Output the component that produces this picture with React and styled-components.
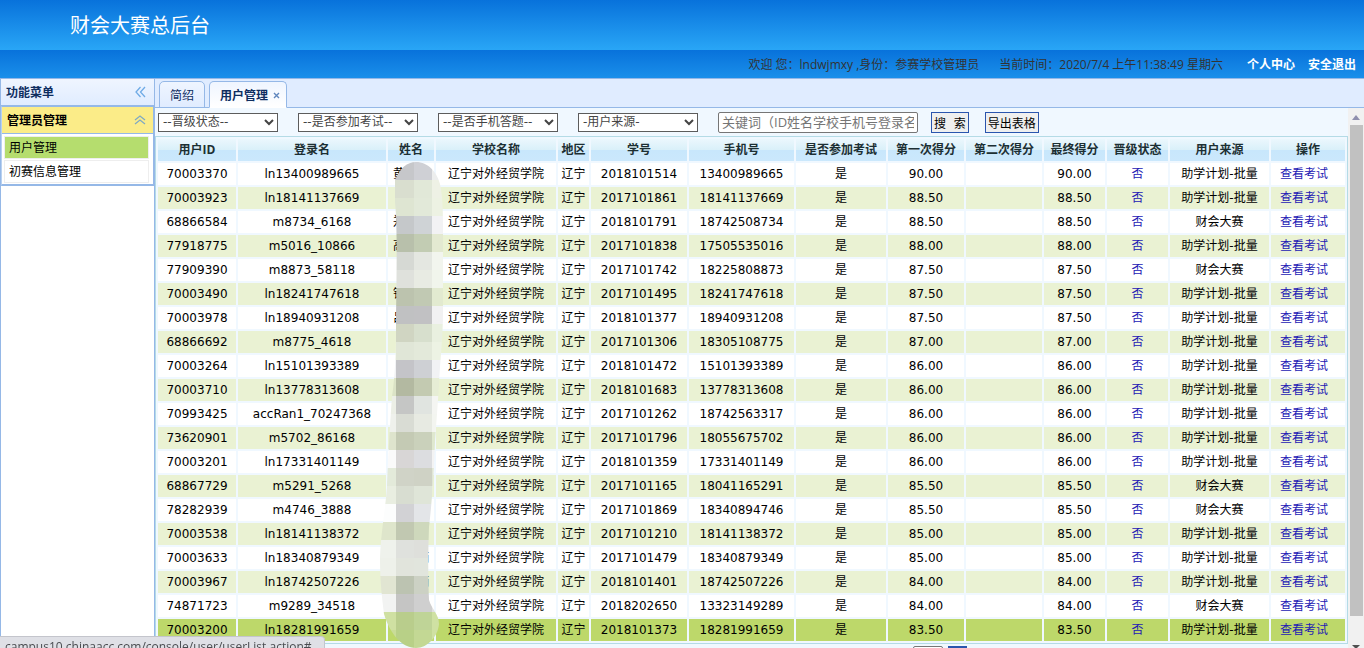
import React from 'react'
import styled, { createGlobalStyle } from 'styled-components'

const GlobalStyle = createGlobalStyle`
  * {
    box-sizing: border-box;
  }

  html, body, #root {
    height: 100%;
    margin: 0;
  }

  body {
    overflow: hidden;
    font-family: 'Open Sans', 'Noto Sans CJK SC', sans-serif;
    font-size: 12px;
    color: #000;
  }
`;

const Page = styled.div`
  display: flex;
  flex-direction: column;
  height: 100vh;
  overflow: hidden;
  background: #fff;
`;

const Banner = styled.header`
  flex: none;
  display: flex;
  align-items: center;
  height: 50px;
  padding: 2px 70px 0;
  background: linear-gradient(#0872db, #29a6f6);
`;

const BannerTitle = styled.h1`
  margin: 0;
  font-size: 20px;
  font-weight: 400;
  line-height: 24px;
  color: #fff;
`;

const UserBar = styled.div`
  flex: none;
  display: flex;
  align-items: center;
  justify-content: flex-end;
  gap: 20px;
  height: 28px;
  padding-right: 8px;
  background: linear-gradient(#0872db, #1a8fea);
  color: #333;
  white-space: nowrap;
`;

const UserLinks = styled.nav`
  display: flex;
  gap: 13px;
  padding-left: 4px;
`;

const UserLink = styled.a`
  color: #fff;
  font-weight: 700;
  text-decoration: none;
`;

const Body = styled.div`
  flex: 1;
  display: flex;
  min-height: 0;
  border-top: 1px solid #95b8e7;
`;

const Sidebar = styled.aside`
  flex: none;
  width: 155px;
  border: solid #95b8e7;
  border-width: 0 1px;
`;

const SidebarHead = styled.div`
  display: flex;
  align-items: center;
  justify-content: space-between;
  height: 27px;
  padding: 0 8px 0 5px;
  border-bottom: 1px solid #95b8e7;
  background: linear-gradient(#eff5ff, #e0ecff);
  color: #0e2d5f;
  font-weight: 700;
`;

const Accordion = styled.section`
  border: 1px solid #95b8e7;
  border-bottom-width: 2px;
  border-left-color: #b9d1f0;
`;

const AccordionHead = styled.div`
  display: flex;
  align-items: center;
  justify-content: space-between;
  height: 27px;
  padding: 0 7px 0 5px;
  border-bottom: 1px solid #95b8e7;
  background: #fbec88;
  font-weight: 700;
`;

const Menu = styled.ul`
  display: flex;
  flex-direction: column;
  gap: 1px;
  margin: 0;
  padding: 2px 4px 1px 2px;
  list-style: none;
`;

const MenuLink = styled.a`
  display: block;
  height: 23px;
  padding: 0 4px;
  border: 1px solid #eee;
  background: ${props => (props.$active ? '#b5dd6e' : '#fff')};
  color: #000;
  line-height: 21px;
  text-decoration: none;
`;

const Main = styled.main`
  flex: 1;
  display: flex;
  flex-direction: column;
  min-width: 0;
`;

const Tabs = styled.div`
  flex: none;
  display: flex;
  align-items: flex-end;
  gap: 4px;
  height: 29px;
  padding: 0 4px;
  border-bottom: 1px solid #95b8e7;
  background: #e0ecff;
`;

const Tab = styled.button`
  height: 27px;
  margin: 0 0 -1px;
  padding: 0 10px;
  border: 1px solid #95b8e7;
  border-bottom-color: ${props => (props.$active ? '#fff' : '#95b8e7')};
  border-radius: 5px 5px 0 0;
  background: ${props => (props.$active ? 'linear-gradient(#eff5ff, #fff)' : 'linear-gradient(#eff5ff, #e0ecff)')};
  color: #0e2d5f;
  font: inherit;
  font-weight: ${props => (props.$active ? 700 : 400)};
  display: flex;
  align-items: center;
  gap: 5px;

  svg {
    margin-right: -4px;
  }
`;

const ScrollArea = styled.div`
  flex: 1;
  display: flex;
  min-height: 0;
`;

const Content = styled.div`
  flex: 1;
  min-width: 0;
  overflow: hidden;
  background: #f0f8ff;
`;

const Filters = styled.form`
  display: flex;
  align-items: center;
  gap: 20px;
  height: 28px;
  padding: 0 3px;
`;

const Select = styled.select`
  width: 120px;
  height: 19px;
  border: 1px solid #5c5c5c;
  border-radius: 0;
  background-color: #fff;
  color: #444;
  font: 12px 'DejaVu Sans', 'Noto Sans CJK SC', sans-serif;
`;

const Keyword = styled.input`
  width: 200px;
  height: 21px;
  padding: 0 3px;
  border: 1px solid #767676;
  border-radius: 2px;
  font: 13px 'Open Sans', 'Noto Sans CJK SC', sans-serif;

  &::placeholder {
    color: #757575;
  }
`;

const Actions = styled.div`
  display: flex;
  gap: 16px;
  margin-left: -7px;
`;

const Button = styled.button`
  height: 21px;
  padding: 0 2px;
  border: 1px solid #2a55ae;
  background: #efefef;
  color: #000;
  font: 12px 'DejaVu Sans', 'Noto Sans CJK SC', sans-serif;
  white-space: nowrap;
`;

const TableWrap = styled.div`
  position: relative;
`;

const Table = styled.table`
  width: 100%;
  table-layout: fixed;
  border: 1px solid #b4dbe6;
  border-collapse: separate;
  border-spacing: 2px;
  font-family: 'DejaVu Sans', 'Noto Sans CJK SC', sans-serif;
  font-size: 12px;
  text-align: center;
`;

const Th = styled.th`
  height: 22px;
  padding: 0;
  background: linear-gradient(#ebf7fd, #d9f0f9 50%, #c8e7fc 50%, #cbe8fc);
  color: #1c2f33;
  font-family: 'Open Sans', 'Noto Sans CJK SC', sans-serif;
  font-weight: 700;
  line-height: 20px;
  white-space: nowrap;
`;

const Row = styled.tr`
  background: ${props => props.$tone};
`;

const Td = styled.td`
  height: 22px;
  padding: 0;
  line-height: 20px;
  white-space: nowrap;
`;

const NameTd = styled(Td)`
  padding: 0 5px;
  text-align: ${props => (props.$end ? 'right' : 'left')};
`;

const ActionTd = styled(Td)`
  padding-right: 8px;
`;

const CellLink = styled.a`
  color: #2318b4;
  text-decoration: none;
`;

const Mosaic = styled.svg`
  position: absolute;
  top: 26px;
  left: 223px;
`;

const Pager = styled.div`
  display: flex;
  justify-content: flex-end;
  gap: 5px;
  padding: 2px 381px 0 0;
`;

const PageInput = styled.input`
  width: 30px;
  height: 21px;
  border: 1px solid #767676;
  border-radius: 2px;
`;

const PageButton = styled(Button)`
  width: 19px;
  border-top-width: 2px;
`;

const ScrollTrack = styled.div`
  flex: none;
  display: flex;
  flex-direction: column;
  align-items: center;
  justify-content: space-between;
  width: 16px;
  padding-top: 7px;
  background: #f1f1f1;
`;

const ScrollThumb = styled.div`
  flex: 1;
  width: 13px;
  margin: 5px 0 29px;
  background: #c1c1c1;
`;

const StatusBubble = styled.div`
  position: fixed;
  left: 0;
  bottom: 0;
  height: 12px;
  padding: 0 12px 0 5px;
  border: solid #c4c5cc;
  border-width: 1px 1px 0 0;
  border-radius: 0 4px 0 0;
  background: #dfe0e6;
  color: #4a4c50;
  line-height: 20px;
`;

const columns = [
  ['用户ID', 78],
  ['登录名', 148],
  ['姓名', 46],
  ['学校名称', 120],
  ['地区', 31],
  ['学号', 96],
  ['手机号', 105],
  ['是否参加考试', 90],
  ['第一次得分', 76],
  ['第二次得分', 76],
  ['最终得分', 61],
  ['晋级状态', 61],
  ['用户来源', 99],
  ['操作', 74],
];

const PLAN = '助学计划-批量';
const CONTEST = '财会大赛';

// id, login, name, student no, phone, score, source
const users = [
  ['70003370', 'ln13400989665', '黄', '2018101514', '13400989665', '90.00', PLAN],
  ['70003923', 'ln18141137669', '', '2017101861', '18141137669', '88.50', PLAN],
  ['68866584', 'm8734_6168', '郑', '2018101791', '18742508734', '88.50', CONTEST],
  ['77918775', 'm5016_10866', '高', '2017101838', '17505535016', '88.00', PLAN],
  ['77909390', 'm8873_58118', '', '2017101742', '18225808873', '87.50', CONTEST],
  ['70003490', 'ln18241747618', '钟', '2017101495', '18241747618', '87.50', PLAN],
  ['70003978', 'ln18940931208', '吕', '2018101377', '18940931208', '87.50', PLAN],
  ['68866692', 'm8775_4618', '', '2017101306', '18305108775', '87.00', PLAN],
  ['70003264', 'ln15101393389', '', '2018101472', '15101393389', '86.00', PLAN],
  ['70003710', 'ln13778313608', '', '2018101683', '13778313608', '86.00', PLAN],
  ['70993425', 'accRan1_70247368', '', '2017101262', '18742563317', '86.00', PLAN],
  ['73620901', 'm5702_86168', '', '2017101796', '18055675702', '86.00', PLAN],
  ['70003201', 'ln17331401149', '', '2018101359', '17331401149', '86.00', PLAN],
  ['68867729', 'm5291_5268', '', '2017101165', '18041165291', '85.50', CONTEST],
  ['78282939', 'm4746_3888', '', '2017101869', '18340894746', '85.50', CONTEST],
  ['70003538', 'ln18141138372', '', '2017101210', '18141138372', '85.00', PLAN],
  ['70003633', 'ln18340879349', '楠', '2017101479', '18340879349', '85.00', PLAN],
  ['70003967', 'ln18742507226', '楠', '2018101401', '18742507226', '84.00', PLAN],
  ['74871723', 'm9289_34518', '', '2018202650', '13323149289', '84.00', CONTEST],
  ['70003200', 'ln18281991659', '', '2018101373', '18281991659', '83.50', PLAN],
];

const mosaicRows = [
  ['#c6c7ca', '#c6c7ca', '#cfd0d5', '#eceded'],
  ['#d9decf', '#d9decf', '#e1e8d8', '#eef1e5'],
  ['#dee5d2', '#dee5d2', '#e2e9d9', '#edf2e3'],
  ['#c5c8ca', '#c5c8ca', '#cfd3d6', '#f2f2f4'],
  ['#b8c0ab', '#b8c0ab', '#c2ccb3', '#e3e9d1'],
  ['#eceeea', '#d6d9d4', '#e4e7e1', '#f2f5ee'],
  ['#eceeea', '#dfe1dc', '#e8ebe3', '#f1f5ec'],
  ['#dbe3c6', '#bcc3ae', '#c1c9b3', '#e2ead0'],
  ['#f1f1f2', '#c0c1c2', '#c1c1c3', '#f1f1f2'],
  ['#e9f0e0', '#d0d5c2', '#d7dfcd', '#e9f0e0'],
  ['#edf3e4', '#e0e6d7', '#e3e9da', '#edf3e4'],
  ['#f1f2f4', '#c4c4c8', '#ced0d4', '#f1f2f4'],
  ['#dbe3c6', '#b3b9a1', '#c3cab1', '#e6edd5'],
  ['#ecefe6', '#c5c6c5', '#e0e4e0', '#f4f5f2'],
  ['#eff1ec', '#d9dcd4', '#e7eae2', '#f3f5f0'],
  ['#dee4cd', '#c4cab4', '#cad1bb', '#dfe8cf'],
  ['#fafafa', '#d8d6d6', '#dcdde0', '#f3f3f3'],
  ['#e3eada', '#d0d3c7', '#cfd2c5', '#e0e6d6'],
  ['#e9eee1', '#d8ddd1', '#dfe5d8', '#e9eee1'],
  ['#fcfdfd', '#d2d2d5', '#e3e5e8', '#f3f3f3'],
  ['#dee5cb', '#c1c8b1', '#ced8bc', '#dfe8cf'],
  ['#eff2ec', '#dfe1dd', '#dedfdb', '#e9eae6'],
  ['#eef1ea', '#e1e4dc', '#e1e5dd', '#e9eae6'],
  ['#e1e5d2', '#bcc3b1', '#ccd1c4', '#dfe8cf'],
  ['#f2f3f2', '#c5c5c4', '#cfcfcf', '#e0e0e0'],
  ['#cfe0a2', '#b9cd8c', '#bfd497', '#cfe1a3'],
  ['#c9dc98', '#b8d087', '#c3d894', '#cfe1a3'],
];

const Redaction = () => (
  <Mosaic width="72" height="486" viewBox="0 0 72 486" aria-hidden="true">
    <defs>
      <clipPath id="brush">
        <path d="M17 18 C22 6 29 0 38 0 C50 0 59 10 62 22 C65 36 65 52 65 70 L65 150 C65 175 62 200 61 222 C60 240 58 265 57 280 C56 310 54 340 51 365 C50 390 50 415 51 438 C54 448 61 452 61 462 C60 474 50 486 38 486 C24 486 12 472 6 452 C4 435 2 420 2 396 C3 370 7 350 9 325 C10 300 12 260 14 235 C17 215 18 190 18 170 C18 130 20 70 17 40 Z" />
      </clipPath>
    </defs>
    <g clipPath="url(#brush)" shapeRendering="crispEdges">
      {mosaicRows.map((row, y) =>
        row.map((fill, x) => (
          <rect key={`${x}-${y}`} x={x * 18} y={y * 18} width="18" height="18" fill={fill} />
        ))
      )}
    </g>
  </Mosaic>
);

const rowTone = (index) => {
  if (index === users.length - 1) return '#bdd86a';
  return index % 2 ? '#eaf2d3' : '#fff';
};

const App = () => {
  return (
    <Page>
      <GlobalStyle />

      <Banner>
        <BannerTitle>财会大赛总后台</BannerTitle>
      </Banner>
      <UserBar>
        <span>欢迎 您：lndwjmxy ,身份：参赛学校管理员</span>
        <span>当前时间：2020/7/4 上午11:38:49 星期六</span>
        <UserLinks>
          <UserLink href="#profile">个人中心</UserLink>
          <UserLink href="#logout">安全退出</UserLink>
        </UserLinks>
      </UserBar>

      <Body>
        <Sidebar>
          <SidebarHead>
            功能菜单
            <svg width="11" height="12" viewBox="0 0 11 12" fill="none" stroke="#6fabe6" strokeWidth="1.3" aria-hidden="true">
              <path d="M5.5 1 L1 6 L5.5 11 M10 1 L5.5 6 L10 11" />
            </svg>
          </SidebarHead>
          <Accordion>
            <AccordionHead>
              管理员管理
              <svg width="12" height="10" viewBox="0 0 12 10" fill="none" stroke="#7fa9c4" strokeWidth="1.3" aria-hidden="true">
                <path d="M1 5 L6 1 L11 5 M1 9 L6 5 L11 9" />
              </svg>
            </AccordionHead>
            <Menu>
              <li><MenuLink href="#users" $active>用户管理</MenuLink></li>
              <li><MenuLink href="#prelim">初赛信息管理</MenuLink></li>
            </Menu>
          </Accordion>
        </Sidebar>

        <Main>
          <Tabs>
            <Tab type="button">简绍</Tab>
            <Tab type="button" $active>
              用户管理
              <svg width="7" height="9" viewBox="0 0 7 9" stroke="#5f86bd" strokeWidth="1.4" aria-hidden="true">
                <path d="M1 3 L6 8 M6 3 L1 8" />
              </svg>
            </Tab>
          </Tabs>

          <ScrollArea>
            <Content>
              <Filters>
                <Select aria-label="晋级状态"><option>--晋级状态--</option></Select>
                <Select aria-label="是否参加考试"><option>--是否参加考试--</option></Select>
                <Select aria-label="是否手机答题"><option>--是否手机答题--</option></Select>
                <Select aria-label="用户来源"><option>-用户来源-</option></Select>
                <Keyword type="text" aria-label="关键词" placeholder="关键词（ID姓名学校手机号登录名）" />
                <Actions>
                  <Button type="button">搜&nbsp; 索</Button>
                  <Button type="button">导出表格</Button>
                </Actions>
              </Filters>

              <TableWrap>
                <Table>
                  <colgroup>
                    {columns.map(([label, width]) => <col key={label} width={width} />)}
                  </colgroup>
                  <thead>
                    <tr>
                      {columns.map(([label]) => <Th key={label} scope="col">{label}</Th>)}
                    </tr>
                  </thead>
                  <tbody>
                    {users.map(([id, login, name, no, phone, score, source], index) => (
                      <Row key={id} $tone={rowTone(index)}>
                        <Td>{id}</Td>
                        <Td>{login}</Td>
                        <NameTd $end={index > 15}>{name}</NameTd>
                        <Td>辽宁对外经贸学院</Td>
                        <Td>辽宁</Td>
                        <Td>{no}</Td>
                        <Td>{phone}</Td>
                        <Td>是</Td>
                        <Td>{score}</Td>
                        <Td />
                        <Td>{score}</Td>
                        <Td><CellLink href="#status">否</CellLink></Td>
                        <Td>{source}</Td>
                        <ActionTd><CellLink href="#exam">查看考试</CellLink></ActionTd>
                      </Row>
                    ))}
                  </tbody>
                </Table>
                <Redaction />
              </TableWrap>

              <Pager>
                <PageInput type="text" aria-label="页码" />
                <PageButton type="button" aria-label="跳转" />
              </Pager>
            </Content>

            <ScrollTrack aria-hidden="true">
              <svg width="8" height="5" viewBox="0 0 8 5"><path d="M0 5 L4 0 L8 5 Z" fill="#8f8fae" /></svg>
              <ScrollThumb />
              <svg width="8" height="3" viewBox="0 0 8 3"><path d="M0 0 H8 L5 3 H3 Z" fill="#505050" /></svg>
            </ScrollTrack>
          </ScrollArea>
        </Main>
      </Body>

      <StatusBubble>campus10.chinaacc.com/console/user/userList.action#</StatusBubble>
    </Page>
  )
}

export default App
